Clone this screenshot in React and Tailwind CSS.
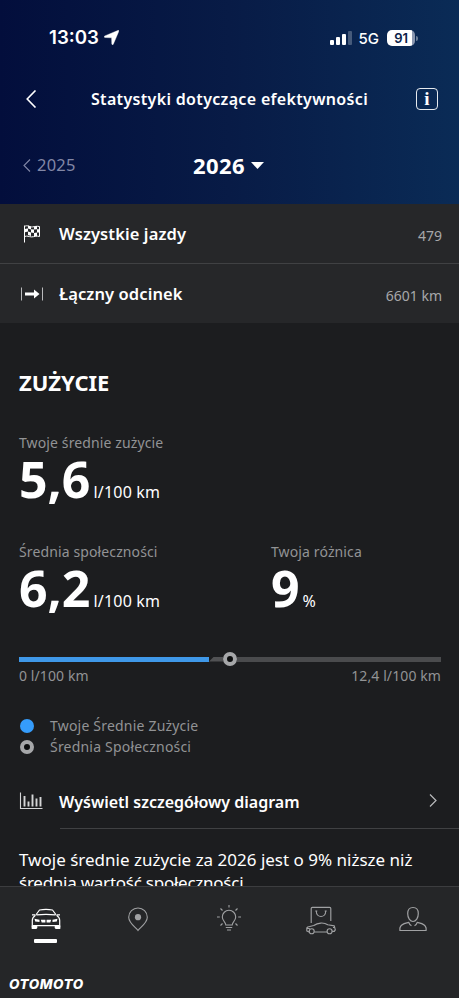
function StatusBar() {
  return (
    <div className="flex h-[76px] items-center justify-between pl-[49px] pr-[41px] font-['Inter',sans-serif]">
      <div className="flex items-center gap-[5px]">
        <span className="text-[18.700px] font-semibold leading-none">13:03</span>
        <svg width="15" height="15" viewBox="0 0 15 15" fill="currentColor">
          <path d="M14.300.300a.6.6 0 0 1 .6.8L9.300 14.200c-.3.8-1.400.7-1.500-.2L7.600 7.800 1 7.500c-.9 0-1.100-1.200-.2-1.600Z" stroke="currentColor" strokeWidth=".4" />
        </svg>
      </div>
      <div className="flex items-center">
        <div className="flex h-[14px] items-end gap-[2px]">
          <span className="h-[5px] w-1 rounded-[1px] bg-white" />
          <span className="h-2 w-1 rounded-[1px] bg-white" />
          <span className="h-[11px] w-1 rounded-[1px] bg-white" />
          <span className="h-[14px] w-1 rounded-[1px] bg-white/25" />
        </div>
        <span className="ml-[7px] text-[15px] font-medium leading-none">5G</span>
        <span className="ml-2 flex h-4 w-7 items-center justify-center rounded-[5px] bg-linear-to-r from-white from-91% to-[#8a97b0] to-91% text-[13px] font-semibold leading-none tracking-[-0.2px] text-[#0a2148]">
          91
        </span>
        <span className="ml-px h-[5px] w-[2px] rounded-r bg-white/40" />
      </div>
    </div>
  );
}

function FlagIcon() {
  return (
    <svg className="ml-[2px]" width="20" height="20" viewBox="0 0 20 20" fill="none" stroke="currentColor" strokeWidth="1">
      <path d="M2.500 18.500V1.500M2.500 2.500c3-2 5 .8 8 .4 2.500-.2 4-1 7-.4v10c-3-1-5 .4-8 .4-3-.2-4-1.400-7-.4" />
      <path
        d="M6 1.500l3 1v3l-3-1ZM12 2.500l3-.5v3.300l-3 .3ZM3 5l3-.8v3.300l-3 .8ZM9 5.300l3 .3v3.300l-3-.3ZM15 5.300h2.500v3.300H15ZM6 7.500l3 1.100v3.300l-3-.8ZM12 8.900l3-.3V12l-3 .4Z"
        fill="currentColor"
        stroke="none"
      />
    </svg>
  );
}

function DistanceIcon() {
  return (
    <svg className="ml-px" width="22" height="14" viewBox="0 0 22 14" fill="none">
      <path d="M.5.500v13M21.500.500v13" stroke="#b9babc" />
      <path d="M4 5.600h9V2.500l5.500 4.500-5.500 4.500V8.400H4Z" fill="currentColor" />
    </svg>
  );
}

function ChartIcon() {
  return (
    <svg className="-mt-[2px]" width="24" height="18" viewBox="0 0 24 18" fill="none" stroke="#d4d5d6">
      <path d="M1.500.5v16h22" strokeWidth="1.100" />
      <path d="M5.500 14.500V4M9.500 14.500v-5M13.500 14.500v-12M17.500 14.500v-8M21.500 14.500V5" strokeWidth="1.900" />
    </svg>
  );
}

function SummaryRow({ icon, label, value }) {
  return (
    <div className="flex h-[59px] shrink-0 items-center bg-[#262729] pl-5 pr-[17px]">
      <span className="flex w-[39px] items-center">{icon}</span>
      <span className="pt-[2px] text-[16.500px] font-semibold tracking-[0.1px]">{label}</span>
      <span className="ml-auto pt-[4px] text-[14px] text-[#a6a7a9]">{value}</span>
    </div>
  );
}

function Metric({ label, value, unit }) {
  return (
    <div>
      <p className="text-[14px] leading-[20px] tracking-[0.120px] text-[#929395]">{label}</p>
      <p className="flex h-[52px] items-baseline leading-[52px]">
        <span className="text-[50px] font-bold">{value}</span>
        <span className="ml-[3px] text-[16px] tracking-[0.2px]">{unit}</span>
      </p>
    </div>
  );
}

function Ring() {
  return <span className="block size-[14px] rounded-full border-4 border-[#a6a7a9] bg-[#0c0d0e]" />;
}

function CarIcon() {
  return (
    <svg width="32" height="32" viewBox="0 0 32 32" fill="none" stroke="#fff" strokeWidth="1.200" strokeLinejoin="round">
      <path d="M5.800 10 9.500 5q6.500-1.300 13 0l3.700 5" />
      <path d="M6.500 9.800q9.500-1 19 0M2 9.800h3M30 9.800h-3" />
      <path d="M5.500 10.300Q2.300 12.500 2.300 15.500v7M26.500 10.300q3.200 2.200 3.200 5.200v7M3 20.700h26" />
      <path d="M1.700 20.500h5.600v2.500l-1 1H1.700ZM30.300 20.500h-5.600v2.500l1 1h4.600ZM4.500 13.800l5 1v2.200l-4.300-.5ZM27.500 13.800l-5 1v2.200l4.300-.5ZM10.800 14.700h4.600v2.700h-3.700ZM16.600 14.700h4.600l-.9 2.700h-3.700Z" fill="#fff" stroke="none" />
    </svg>
  );
}

function PinIcon() {
  return (
    <svg width="32" height="32" viewBox="0 0 32 32" fill="none" stroke="#a0a1a3" strokeWidth="1.100">
      <path d="M16 25.500c-2.500-3.300-9.300-7.500-9.300-13.200a9.300 9.300 0 0 1 18.600 0c0 5.700-6.800 9.900-9.300 13.200Z" />
      <circle cx="16" cy="12.200" r="3.100" fill="#a0a1a3" stroke="none" />
    </svg>
  );
}

function BulbIcon() {
  return (
    <svg width="32" height="32" viewBox="0 0 32 32" fill="none" stroke="#a0a1a3" strokeWidth="1.100">
      <path d="M12.800 20c0-3-3.500-3.900-3.500-8a6.700 6.700 0 0 1 13.400 0c0 4.100-3.500 5-3.500 8ZM12.800 22.500h6.400M14 25h4" />
      <path d="M16 0v2.500M4 12h2.800M25.200 12H28M7.500 3.500l2 2M24.500 3.500l-2 2M7.500 20.500l2-2M24.500 20.500l-2-2" />
    </svg>
  );
}

function ShopIcon() {
  return (
    <svg width="32" height="32" viewBox="0 0 32 32" fill="none" stroke="#a0a1a3" strokeWidth="1.150" strokeLinejoin="round">
      <path d="M6.200 18V3.500q0-1.200 1.200-1.200h17.200q1.200 0 1.200 1.200V16M10.300 6h2M19.700 6h2M11.300 6.200c0 7 9.400 7 9.400 0" />
      <path d="M4.200 27 1.800 26v-3l1-1 6-1.500c4-2.900 10-3.300 14-.8l6.500 1.200 1 4-1 1.500h-2.200M9.300 27h12.700M1.800 23.500h3M28 22.500h2" />
      <circle cx="6.700" cy="26.200" r="2.500" />
      <circle cx="24.600" cy="26.200" r="2.500" />
    </svg>
  );
}

function ProfileIcon() {
  return (
    <svg width="32" height="32" viewBox="0 0 32 32" fill="none" stroke="#a0a1a3" strokeWidth="1.200" strokeLinejoin="round">
      <path d="M16 2.500c3.500 0 5.300 2.300 5.300 6 0 4.500-2.300 8-5.300 8s-5.300-3.500-5.300-8c0-3.700 1.800-6 5.300-6Z" />
      <path d="M14.500 20.700c-1.500-.6-2.300-1.700-2.700-3.300-2 .9-7.500.6-8.900 5.600V25.500h26.200V23c-1.400-5-6.900-4.700-8.900-5.600-.4 1.600-1.200 2.700-2.700 3.300" />
    </svg>
  );
}

const tabs = [CarIcon, PinIcon, BulbIcon, ShopIcon, ProfileIcon];

export default function App() {
  return (
    <div className="flex h-[998px] w-[459px] flex-col overflow-hidden bg-[#1c1d1f] font-['Noto_Sans',sans-serif] text-white">
      <header className="h-[204px] shrink-0 bg-linear-to-r from-[#030e3c] via-[#081b46] to-[#0a2b56]">
        <StatusBar />
        <div className="flex h-[45px] items-center justify-between pl-[26px] pr-[21px]">
          <svg width="11" height="18" viewBox="0 0 11 18" fill="none" stroke="currentColor" strokeWidth="1.600">
            <path d="M9.500.5 1.200 9l8.300 8.500" />
          </svg>
          <h1 className="pl-[6px] pt-px text-[16px] font-semibold tracking-[0.330px]">Statystyki dotyczące efektywności</h1>
          <span className="flex size-[22px] items-center justify-center rounded-[4px] border border-white/90 pb-px font-['Liberation_Serif',serif] text-[19px] font-bold leading-none">
            i
          </span>
        </div>
        <div className="grid h-[88px] grid-cols-3 items-center pl-[23px] pr-[23px]">
          <div className="flex items-center text-[#8287a6]">
            <svg width="8" height="13" viewBox="0 0 8 13" fill="none" stroke="currentColor" strokeWidth="1.100">
              <path d="M7 .5 1 6.500l6 6" />
            </svg>
            <span className="ml-[6px] text-[16.500px] tracking-[0.200px]">2025</span>
          </div>
          <div className="flex items-center justify-center gap-[6px] pr-[2px]">
            <span className="text-[22px] font-bold tracking-[0.400px]">2026</span>
            <svg width="13" height="7" viewBox="0 0 13 7" fill="currentColor">
              <path d="M0 0h13L6.500 7Z" />
            </svg>
          </div>
        </div>
      </header>

      <SummaryRow icon={<FlagIcon />} label="Wszystkie jazdy" value="479" />
      <div className="h-px shrink-0 bg-[#404143]" />
      <SummaryRow icon={<DistanceIcon />} label="Łączny odcinek" value="6601 km" />

      <main className="min-h-0 flex-1 overflow-hidden pl-[19px]">
        <h2 className="mt-[44px] text-[22px] font-bold leading-[30px]">ZUŻYCIE</h2>
        <div className="mt-[36px]">
          <Metric label="Twoje średnie zużycie" value="5,6" unit="l/100 km" />
        </div>
        <div className="mt-[37px] grid grid-cols-[252px_1fr]">
          <Metric label="Średnia społeczności" value="6,2" unit="l/100 km" />
          <Metric label="Twoja różnica" value="9" unit="%" />
        </div>

        <div className="mt-[38px] flex h-[14px] w-[422px] items-center">
          <span className="h-[5px] w-[190px] bg-[#3f98e8]" />
          <span className="h-[5px] w-[14px] bg-[#515254] [clip-path:polygon(5px_0,100%_0,100%_100%,0_100%)]" />
          <Ring />
          <span className="h-[5px] flex-1 bg-[#4a4b4d]" />
        </div>
        <div className="flex w-[422px] justify-between text-[14px] leading-5 tracking-[0.100px] text-[#929395]">
          <span>0 l/100 km</span>
          <span>12,4 l/100 km</span>
        </div>

        <ul className="mt-[30px] text-[14px] leading-[20.500px] tracking-[0.2px] text-[#929395]">
          <li className="flex items-center pl-[1px]">
            <span className="size-[14px] rounded-full bg-[#359cfb]" />
            <span className="ml-4">Twoje Średnie Zużycie</span>
          </li>
          <li className="flex items-center pl-[1px]">
            <Ring />
            <span className="ml-4">Średnia Społeczności</span>
          </li>
        </ul>

        <div className="mt-[18px] flex h-[53px] items-center pr-[22px]">
          <ChartIcon />
          <span className="ml-4 text-[16px] font-semibold">Wyświetl szczegółowy diagram</span>
          <svg className="-mt-[2px] ml-auto" width="8" height="13" viewBox="0 0 8 13" fill="none" stroke="#b9babc" strokeWidth="1.200">
            <path d="m1 .5 6 6-6 6" />
          </svg>
        </div>
        <div className="ml-[41px] h-px bg-[#404143]" />
        <p className="mt-[19px] w-[410px] text-[17px] leading-[23px]">
          Twoje średnie zużycie za 2026 jest o 9% niższe niż{" "}
          <span className="tracking-[-0.250px]">średnią wartość społeczności.</span>
        </p>
      </main>

      <nav className="h-[112px] shrink-0 border-t border-[#3c3d3f] bg-[#252628]">
        <div className="grid h-[84px] grid-cols-5 pt-[18px]">
          {tabs.map((Icon, i) => (
            <div key={i} className="flex flex-col items-center">
              <Icon />
              {i === 0 && <span className="mt-[2px] h-1 w-[23px] rounded-[1px] bg-white" />}
            </div>
          ))}
        </div>
        <p className="pl-[9px] pt-[7px] font-['Inter',sans-serif] text-[13.500px] font-extrabold italic leading-none tracking-[0.550px]">
          OTOMOTO
        </p>
      </nav>
    </div>
  );
}
